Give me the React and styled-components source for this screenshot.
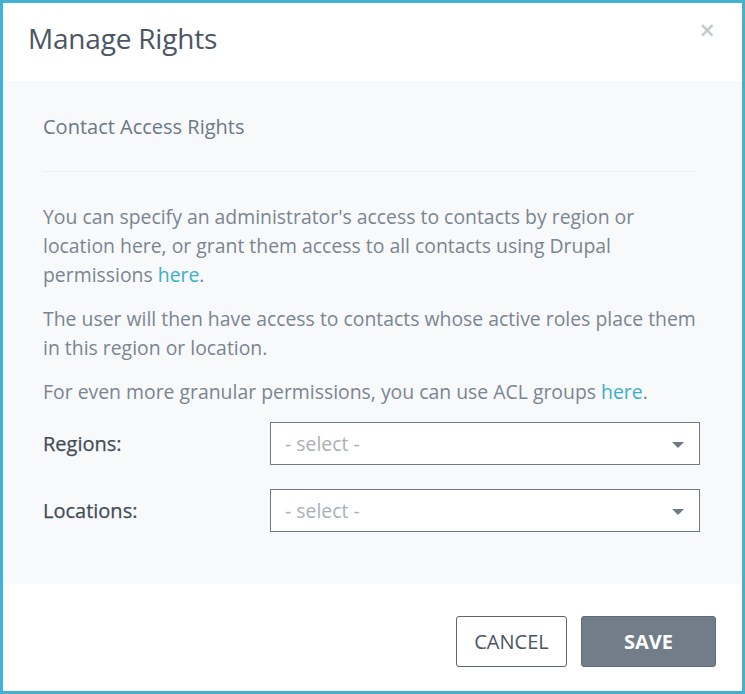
import React from "react";
import styled, { createGlobalStyle } from "styled-components";

const Global = createGlobalStyle`
  html, body { margin: 0; padding: 0; background: #ffffff; }
  body { font-family: "Open Sans", "Liberation Sans", sans-serif; }
  * { box-sizing: border-box; }
`;

const Modal = styled.div`
  width: 745px;
  height: 694px;
  border: 3px solid #44b1cf;
  background: #ffffff;
  display: flex;
  flex-direction: column;
`;

const Header = styled.div`
  height: 78px;
  display: flex;
  align-items: flex-start;
  justify-content: space-between;
  padding: 0 27px 0 25px;
`;

const Title = styled.h1`
  margin: 0;
  padding-top: 16px;
  font-size: 28px;
  line-height: 38px;
  font-weight: 400;
  color: #4b5663;
  letter-spacing: -0.2px;
`;

const Close = styled.button`
  border: 0;
  background: none;
  padding: 0;
  margin-top: 15px;
  color: #c6c9cc;
  font-size: 27px;
  font-weight: 600;
  line-height: 24px;
  font-family: "Open Sans", sans-serif;
  cursor: pointer;
`;

const Body = styled.div`
  background: #f8f9fb;
  padding: 32px 40px 52px 40px;
`;

const SectionTitle = styled.h2`
  margin: 0 5px 30px 0;
  font-size: 20px;
  font-weight: 400;
  color: #6b7886;
  line-height: 28px;
  padding-bottom: 30px;
  border-bottom: 1px solid #edf0f3;
`;

const Para = styled.p`
  margin: 0 0 15px 0;
  font-size: 19.4px;
  line-height: 29px;
  color: #7a8591;
`;

const Link = styled.a`
  color: #3aafcc;
  text-decoration: none;
`;

const FieldRow = styled.div`
  display: flex;
  align-items: center;
  margin-top: ${(p) => p.$top}px;
`;

const Label = styled.label`
  width: 227px;
  font-size: 20px;
  color: #414c58;
  font-weight: 400;
  -webkit-text-stroke: 0.25px #414c58;
`;

const Select = styled.div`
  width: 430px;
  height: 43px;
  border: 1px solid #6e7b87;
  background: #ffffff;
  display: flex;
  align-items: center;
  justify-content: space-between;
  padding: 0 15px 0 14px;
  font-size: 19.4px;
  color: #aab0b6;
`;

const Caret = styled.span`
  width: 0;
  height: 0;
  border-left: 6px solid transparent;
  border-right: 6px solid transparent;
  border-top: 6px solid #6e7b87;
  margin-top: 2px;
`;

const Footer = styled.div`
  flex: 1;
  display: flex;
  justify-content: flex-end;
  align-items: flex-start;
  gap: 14px;
  padding: 32px 26px 0 0;
`;

const Button = styled.button`
  height: 51px;
  width: ${(p) => (p.$primary ? 135 : 111)}px;
  padding: 0;
  border-radius: 3px;
  border: 1px solid ${(p) => (p.$primary ? "#5f6b76" : "#5a6570")};
  background: ${(p) => (p.$primary ? "#717e8a" : "#ffffff")};
  color: ${(p) => (p.$primary ? "#ffffff" : "#4b5663")};
  font-family: "Open Sans", sans-serif;
  font-size: 20px;
  font-weight: ${(p) => (p.$primary ? 700 : 400)};
  cursor: pointer;
`;

export default function App() {
  return (
    <>
      <Global />
      <Modal>
        <Header>
          <Title>Manage Rights</Title>
          <Close aria-label="close">×</Close>
        </Header>
        <Body>
          <SectionTitle>Contact Access Rights</SectionTitle>
          <Para>
            You can specify an administrator's access to contacts by region or
            location here, or grant them access to all contacts using Drupal
            permissions <Link href="#">here</Link>.
          </Para>
          <Para>
            The user will then have access to contacts whose active roles place
            them in this region or location.
          </Para>
          <Para>
            For even more granular permissions, you can use ACL groups{" "}
            <Link href="#">here</Link>.
          </Para>
          <FieldRow $top={16}>
            <Label>Regions:</Label>
            <Select>
              <span>- select -</span>
              <Caret />
            </Select>
          </FieldRow>
          <FieldRow $top={24}>
            <Label>Locations:</Label>
            <Select>
              <span>- select -</span>
              <Caret />
            </Select>
          </FieldRow>
        </Body>
        <Footer>
          <Button>CANCEL</Button>
          <Button $primary>SAVE</Button>
        </Footer>
      </Modal>
    </>
  );
}
